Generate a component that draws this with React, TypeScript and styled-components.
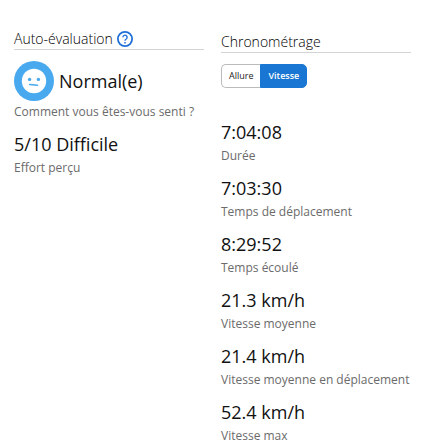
import React, { useState } from "react";
import styled, { createGlobalStyle } from "styled-components";

const GlobalStyle = createGlobalStyle`
  *, *::before, *::after { box-sizing: border-box; }
  body {
    margin: 0;
    background: #fff;
    color: #111;
    font-family: "Open Sans", sans-serif;
  }
`;

const Page = styled.main`
  display: grid;
  grid-template-columns: 1fr 1fr;
  column-gap: 17px;
  align-items: start;
  padding: 28px 20px 0 14px;
`;

const Column = styled.section<{ $offset?: number }>`
  padding-top: ${(p) => p.$offset ?? 0}px;
  min-width: 0;
`;

const Heading = styled.h2`
  display: flex;
  align-items: center;
  gap: 4px;
  height: 22px;
  margin: 0;
  border-bottom: 1px solid #d4d4d4;
  color: #000;
  font-size: 14px;
  line-height: 20px;
  font-weight: 300;
`;

const HelpButton = styled.button`
  display: flex;
  padding: 0;
  border: 0;
  background: none;
  cursor: pointer;
`;

const Feeling = styled.div`
  display: flex;
  align-items: center;
  gap: 5px;
  margin: 11px 0 1px;
`;

const Value = styled.div`
  font-size: 18px;
  line-height: 27px;
  white-space: nowrap;
`;

const Label = styled.div`
  font-size: 12px;
  line-height: 20px;
  color: #6b6b6b;
  white-space: nowrap;
`;

const Toggle = styled.div`
  display: flex;
  width: max-content;
  margin: 11px 0 31px;
`;

const ToggleButton = styled.button<{ $active: boolean }>`
  height: 24px;
  padding: 0 6px;
  border: 1px solid ${(p) => (p.$active ? "#1976d2" : "#bbb")};
  background: ${(p) => (p.$active ? "#1976d2" : "#fff")};
  color: ${(p) => (p.$active ? "#fff" : "#222")};
  font: ${(p) => (p.$active ? 600 : 400)} 9px/20px "Open Sans", sans-serif;
  cursor: pointer;
  &:first-child { padding-left: 7px; border-radius: 5px 0 0 5px; border-right: 0; }
  &:last-child { padding: 0 7px 0 8px; border-radius: 0 5px 5px 0; }
`;

const Stat = styled.div`
  margin-bottom: 9px;
`;

const stats = [
  ["7:04:08", "Durée"],
  ["7:03:30", "Temps de déplacement"],
  ["8:29:52", "Temps écoulé"],
  ["21.3 km/h", "Vitesse moyenne"],
  ["21.4 km/h", "Vitesse moyenne en déplacement"],
  ["52.4 km/h", "Vitesse max"],
];

export default function App() {
  const [mode, setMode] = useState("Vitesse");
  return (
    <>
      <GlobalStyle />
      <Page>
        <Column>
          <Heading>
            Auto-évaluation
            <HelpButton aria-label="Aide">
              <svg width="16" height="16" viewBox="0 0 16 16" fill="none" stroke="#2070d8">
                <circle cx="8" cy="8" r="7.1" strokeWidth="1.8" />
                <path d="M5.9 6.3a2.1 2.1 0 1 1 3.3 1.7C8.4 8.5 8 8.8 8 9.7" strokeWidth="1.4" />
                <path d="M8 10.9v1.5" strokeWidth="1.5" />
              </svg>
            </HelpButton>
          </Heading>
          <Feeling>
            <svg width="40" height="40" viewBox="0 0 40 40" aria-hidden="true">
              <circle cx="20" cy="20" r="20" fill="#49a9ee" />
              <circle cx="20" cy="20" r="12.2" fill="#fff" />
              <circle cx="15.6" cy="18.4" r="1.7" fill="#49a9ee" />
              <circle cx="24.4" cy="18.4" r="1.7" fill="#49a9ee" />
              <path d="M15.7 23.5l7.8.7" stroke="#49a9ee" strokeWidth="1.6" strokeLinecap="round" />
            </svg>
            <Value>Normal(e)</Value>
          </Feeling>
          <Stat>
            <Label>Comment vous êtes-vous senti ?</Label>
          </Stat>
          <Stat>
            <Value>5/10 Difficile</Value>
            <Label>Effort perçu</Label>
          </Stat>
        </Column>
        <Column $offset={3}>
          <Heading>Chronométrage</Heading>
          <Toggle role="group" aria-label="Chronométrage">
            {["Allure", "Vitesse"].map((m) => (
              <ToggleButton key={m} $active={m === mode} aria-pressed={m === mode} onClick={() => setMode(m)}>
                {m}
              </ToggleButton>
            ))}
          </Toggle>
          {stats.map(([value, label]) => (
            <Stat key={label}>
              <Value>{value}</Value>
              <Label>{label}</Label>
            </Stat>
          ))}
        </Column>
      </Page>
    </>
  );
}
